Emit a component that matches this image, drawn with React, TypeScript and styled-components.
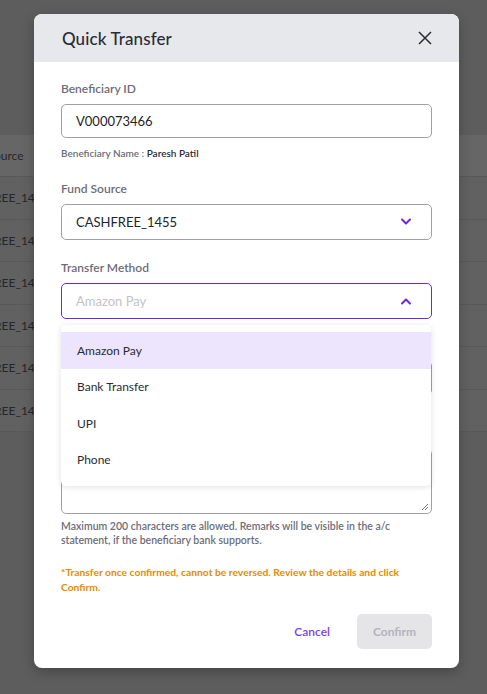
import React from "react";
import styled, { createGlobalStyle } from "styled-components";

const Global = createGlobalStyle`
  html, body { margin: 0; padding: 0; }
  body {
    background: #5d5d5e;
    font-family: Lato, "Open Sans", Arial, sans-serif;
    width: 487px;
    height: 694px;
    overflow: hidden;
  }
  * { box-sizing: border-box; }
`;

const Page = styled.div`
  width: 487px;
  height: 694px;
  position: relative;
  overflow: hidden;
`;

const BgTable = styled.div`
  display: flex;
  flex-direction: column;
  padding-top: 135px;
  width: 487px;
`;

const BgRow = styled.div<{ $head?: boolean }>`
  height: ${(p) => (p.$head ? 42 : 42.5)}px;
  display: flex;
  align-items: center;
  background: ${(p) => (p.$head ? "#666667" : "#616162")};
  border-bottom: 1px solid #59595a;
  font-size: 12px;
  color: #262628;
  margin-left: -6px;
`;

const Modal = styled.div`
  position: absolute;
  left: 34px;
  top: 14px;
  width: 425px;
  height: 654px;
  background: #ffffff;
  border-radius: 8px;
  box-shadow: 0 4px 12px rgba(0, 0, 0, 0.25);
  overflow: hidden;
  display: flex;
  flex-direction: column;
`;

const Header = styled.div`
  height: 48px;
  flex: none;
  background: #e6e8ec;
  display: flex;
  align-items: center;
  justify-content: space-between;
  padding: 0 26px 0 28px;
`;

const Title = styled.h2`
  margin: 0;
  font-size: 17px;
  font-weight: 500;
  color: #2b2b36;
  letter-spacing: 0.1px;
`;

const CloseBtn = styled.button`
  border: none;
  background: transparent;
  padding: 0;
  width: 16px;
  height: 16px;
  display: flex;
  align-items: center;
  justify-content: center;
  cursor: pointer;
`;

const Body = styled.div`
  padding: 20px 27px 0 27px;
  display: flex;
  flex-direction: column;
  position: relative;
`;

const Label = styled.label<{ $gap?: number }>`
  display: block;
  font-size: 12px;
  font-weight: 600;
  color: #6d6c79;
  margin-top: ${(p) => p.$gap ?? 0}px;
  margin-bottom: 8px;
  line-height: 14px;
`;

const Input = styled.div`
  height: 34px;
  border: 1px solid #a09eab;
  border-radius: 5px;
  display: flex;
  align-items: center;
  padding: 0 14px;
  font-size: 13px;
  color: #23232b;
`;

const Select = styled.div<{ $open?: boolean }>`
  height: 36px;
  border: 1px solid ${(p) => (p.$open ? "#6a2ad8" : "#a09eab")};
  border-radius: 5px;
  display: flex;
  align-items: center;
  justify-content: space-between;
  padding: 0 19px 0 14px;
  font-size: 13px;
  color: #23232b;
`;

const Placeholder = styled.span`
  color: #c3c2c9;
`;

const Sub = styled.div`
  font-size: 10px;
  font-weight: 600;
  line-height: 12px;
  color: #6d6c79;
  margin-top: 9px;
  span { color: #2b2b36; }
`;

const Textarea = styled.div`
  height: 65px;
  border: 1px solid #a09eab;
  border-radius: 5px;
  position: relative;
`;

const Grip = styled.svg`
  position: absolute;
  right: 2px;
  bottom: 2px;
`;

const Hint = styled.p`
  margin: 5px 0 0;
  font-size: 10.5px;
  font-weight: 600;
  line-height: 14px;
  color: #6d6c79;
`;

const Warning = styled.p`
  margin: 18px 0 0;
  font-size: 10.3px;
  font-weight: 700;
  line-height: 15px;
  color: #e58a05;
`;

const Footer = styled.div`
  display: flex;
  justify-content: flex-end;
  align-items: center;
  gap: 27px;
  margin-top: 19px;
`;

const Cancel = styled.button`
  border: none;
  background: transparent;
  color: #7a3ee3;
  font-family: inherit;
  font-size: 12px;
  font-weight: 600;
  padding: 0;
`;

const Confirm = styled.button`
  width: 75px;
  height: 35px;
  border: none;
  border-radius: 5px;
  background: #e5e5e8;
  color: #b4b3bb;
  font-family: inherit;
  font-size: 12px;
  font-weight: 700;
`;

const Menu = styled.ul`
  position: absolute;
  left: 27px;
  top: 263px;
  width: 370px;
  margin: 0;
  padding: 7px 0 8px;
  list-style: none;
  background: #fff;
  border-radius: 5px;
  box-shadow: 0 1px 6px rgba(0, 0, 0, 0.12);
`;

const Item = styled.li<{ $active?: boolean }>`
  height: 36.5px;
  display: flex;
  align-items: center;
  padding-left: 16px;
  font-size: 12px;
  color: #2b2b36;
  background: ${(p) => (p.$active ? "#ede4fd" : "transparent")};
`;

const Chevron = ({ up }: { up?: boolean }) => (
  <svg width="12" height="8" viewBox="0 0 12 8" fill="none">
    <path
      d={up ? "M2 6.5 L6 2.5 L10 6.5" : "M2 1.5 L6 5.5 L10 1.5"}
      stroke="#6a2ad8"
      strokeWidth="2"
      strokeLinecap="round"
      strokeLinejoin="round"
    />
  </svg>
);

export default function App() {
  const rows = Array.from({ length: 6 });
  return (
    <Page>
      <Global />
      <BgTable>
        <BgRow $head>ource</BgRow>
        {rows.map((_, i) => (
          <BgRow key={i}>REE_1455</BgRow>
        ))}
      </BgTable>
      <Modal>
        <Header>
          <Title>Quick Transfer</Title>
          <CloseBtn aria-label="Close">
            <svg width="14" height="14" viewBox="0 0 14 14">
              <path d="M1 1 L13 13 M13 1 L1 13" stroke="#2b2b36" strokeWidth="1.5" />
            </svg>
          </CloseBtn>
        </Header>
        <Body>
          <Label>Beneficiary ID</Label>
          <Input>V000073466</Input>
          <Sub>
            Beneficiary Name : <span>Paresh Patil</span>
          </Sub>
          <Label $gap={23}>Fund Source</Label>
          <Select>
            CASHFREE_1455
            <Chevron />
          </Select>
          <Label $gap={21}>Transfer Method</Label>
          <Select $open>
            <Placeholder>Amazon Pay</Placeholder>
            <Chevron up />
          </Select>
          <Label $gap={20}>Amount</Label>
          <Input />
          <Label $gap={32}>Remarks</Label>
          <Textarea>
            <Grip width="8" height="8" viewBox="0 0 8 8">
              <path d="M7 1 L1 7 M7 4 L4 7" stroke="#777" strokeWidth="1" />
            </Grip>
          </Textarea>
          <Hint>
            Maximum 200 characters are allowed. Remarks will be visible in the a/c
            <br />
            statement, if the beneficiary bank supports.
          </Hint>
          <Warning>
            *Transfer once confirmed, cannot be reversed. Review the details and click
            <br />
            Confirm.
          </Warning>
          <Footer>
            <Cancel>Cancel</Cancel>
            <Confirm>Confirm</Confirm>
          </Footer>
          <Menu>
            <Item $active>Amazon Pay</Item>
            <Item>Bank Transfer</Item>
            <Item>UPI</Item>
            <Item>Phone</Item>
          </Menu>
        </Body>
      </Modal>
    </Page>
  );
}
